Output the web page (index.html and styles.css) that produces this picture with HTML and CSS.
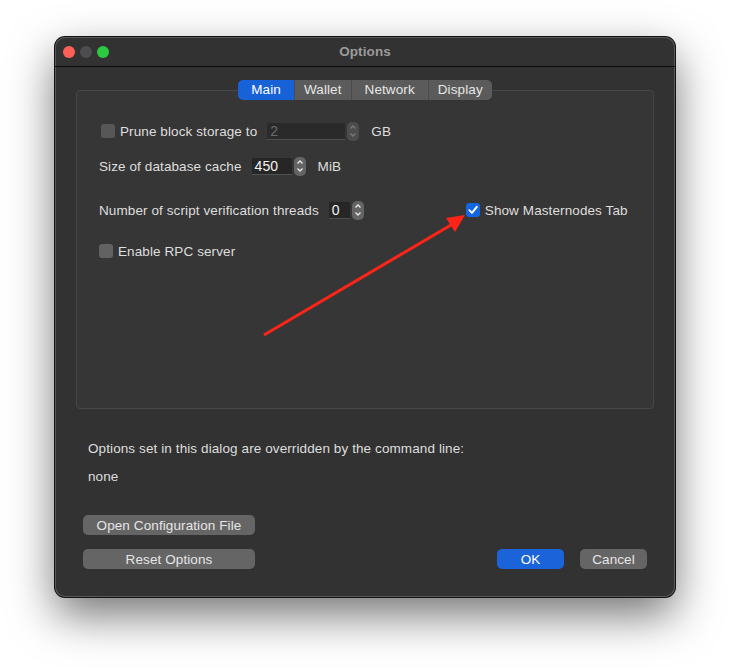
FILE: index.html
```html
<!DOCTYPE html>
<html lang="en">
<head>
  <meta charset="UTF-8">
  <title>Options</title>
  <link rel="stylesheet" href="styles.css">
</head>
<body>
  <div class="window">
    <div class="titlebar">
      <div class="lights">
        <span class="light red"></span>
        <span class="light gray"></span>
        <span class="light green"></span>
      </div>
      <div class="title">Options</div>
    </div>

    <div class="content">
      <div class="tabs">
        <div class="tab active">Main</div>
        <div class="tab">Wallet</div>
        <div class="tab tab-wide">Network</div>
        <div class="tab">Display</div>
      </div>

      <div class="group">
        <div class="row row-prune">
          <span class="check disabled"></span>
          <span class="label">Prune block storage to</span>
          <div class="spin disabled">
            <div class="field prune-field">2</div>
            <div class="stepper"><svg width="12" height="18" viewBox="0 0 12 18"><path d="M3.5 6.5 6 4 8.5 6.5M3.5 11.5 6 14 8.5 11.5" fill="none" stroke="currentColor" stroke-width="1.3"/></svg></div>
          </div>
          <span class="unit">GB</span>
        </div>

        <div class="row row-cache">
          <span class="label">Size of database cache</span>
          <div class="spin">
            <div class="field cache-field">450</div>
            <div class="stepper"><svg width="12" height="18" viewBox="0 0 12 18"><path d="M3.5 6.5 6 4 8.5 6.5M3.5 11.5 6 14 8.5 11.5" fill="none" stroke="currentColor" stroke-width="1.3"/></svg></div>
          </div>
          <span class="unit">MiB</span>
        </div>

        <div class="row row-threads">
          <span class="label">Number of script verification threads</span>
          <div class="spin">
            <div class="field threads-field">0</div>
            <div class="stepper"><svg width="12" height="18" viewBox="0 0 12 18"><path d="M3.5 6.5 6 4 8.5 6.5M3.5 11.5 6 14 8.5 11.5" fill="none" stroke="currentColor" stroke-width="1.3"/></svg></div>
          </div>
          <div class="masternodes">
            <span class="check checked"><svg width="14" height="14" viewBox="0 0 14 14"><path d="M3.3 7.2 6 9.9 10.8 3.8" fill="none" stroke="#fff" stroke-width="1.9" stroke-linecap="round" stroke-linejoin="round"/></svg></span>
            <span class="label">Show Masternodes Tab</span>
          </div>
        </div>

        <div class="row row-rpc">
          <span class="check"></span>
          <span class="label">Enable RPC server</span>
        </div>
      </div>

      <p class="note">Options set in this dialog are overridden by the command line:</p>
      <p class="note note-value">none</p>

      <div class="buttons">
        <button class="btn wide">Open Configuration File</button>
      </div>
      <div class="buttons bottom">
        <button class="btn wide">Reset Options</button>
        <div class="actions">
          <button class="btn primary">OK</button>
          <button class="btn">Cancel</button>
        </div>
      </div>
    </div>

    <!-- annotation arrow -->
    <svg class="arrow" width="620" height="560" viewBox="0 0 620 560">
      <line x1="209" y1="298" x2="396" y2="188" stroke="#ff2418" stroke-width="3"/>
      <polygon points="410,178 391,181 400,195" fill="#ff2418"/>
    </svg>
  </div>
</body>
</html>
```

FILE: styles.css
```css
body {
  margin: 0;
  padding-top: 37px;
  min-height: 670px;
  box-sizing: border-box;
  background: #ffffff;
  font-family: "Liberation Sans", Arial, sans-serif;
  font-size: 13.5px;
  letter-spacing: 0.1px;
  color: #dedede;
}

.window {
  position: relative;
  width: 620px;
  height: 560px;
  margin-left: 55px;
  background: #323232;
  border-radius: 10px;
  box-shadow: 0 0 0 1px #111, inset 0 0 0 1px #5a5a5a, 0 18px 45px rgba(0, 0, 0, 0.55);
  box-sizing: border-box;
  overflow: hidden;
}

.titlebar {
  position: relative;
  height: 29px;
  border-bottom: 1px solid #0c0c0c;
  display: flex;
  align-items: center;
  justify-content: center;
}

.lights {
  position: absolute;
  left: 8px;
  top: 9px;
  display: flex;
  gap: 5px;
}

.light {
  width: 12px;
  height: 12px;
  border-radius: 50%;
}
.light.red { background: #fe5f57; }
.light.gray { background: #4d4d4f; }
.light.green { background: #2bc840; }

.title {
  font-weight: bold;
  color: #9b9b9b;
}

.content {
  padding: 13px 21px 0;
}

.tabs {
  position: relative;
  z-index: 1;
  display: flex;
  justify-content: center;
  height: 20px;
}

.tab {
  height: 20px;
  line-height: 20px;
  padding: 0 9px;
  background: #5b5b5b;
  color: #e6e6e6;
  border-left: 1px solid #4a4a4a;
}
.tab.tab-wide { padding: 0 13px; }
.tab:first-child {
  border-left: none;
  border-radius: 5px 0 0 5px;
  padding: 0 13px;
}
.tab:last-child {
  border-radius: 0 5px 5px 0;
}
.tab.active {
  background: #1862d8;
  color: #fff;
}

.group {
  height: 319px;
  margin-top: -10px;
  padding: 30px 22px 0;
  background: #363636;
  border: 1px solid #474747;
  border-radius: 4px;
  box-sizing: border-box;
}

.row {
  display: flex;
  align-items: center;
  height: 20px;
}
.row-prune { margin-left: 2px; }
.row-cache { margin-top: 15px; }
.row-threads { margin-top: 24px; }
.row-rpc { margin-top: 21px; }

.check {
  width: 14px;
  height: 14px;
  border-radius: 3px;
  background: #626262;
  margin-right: 5px;
  flex: none;
}
.check.disabled { background: #575757; }
.check.checked {
  background: #1466e0;
}
.check svg { display: block; }

.spin {
  display: flex;
  align-items: center;
  margin-left: 10px;
}

.field {
  height: 16px;
  line-height: 16px;
  background: #262626;
  border-bottom: 1px solid #505050;
  padding: 0 3px;
  color: #f2f2f2;
  font-size: 14px;
}
.prune-field { width: 72px; }
.cache-field { width: 34px; }
.threads-field { width: 15px; }

.stepper {
  width: 12px;
  height: 19px;
  margin-left: 2px;
  border-radius: 5px;
  background: #646464;
  color: #e8e8e8;
  display: flex;
  align-items: center;
}
.stepper svg { display: block; }

.spin.disabled .field { color: #6a6a6a; background: #2a2a2a; }
.spin.disabled .stepper { background: #4c4c4c; color: #7a7a7a; }

.unit { margin-left: 12px; }

.masternodes {
  display: flex;
  align-items: center;
  margin-left: 102px;
}

.note {
  margin: 32px 0 0 12px;
  line-height: 16px;
}
.note-value { margin-top: 12px; }

.buttons {
  display: flex;
  align-items: center;
  margin: 30px 7px 0;
}
.buttons.bottom {
  margin-top: 14px;
  justify-content: space-between;
}

.actions {
  display: flex;
  gap: 16px;
}

.btn {
  height: 20px;
  width: 67px;
  border: none;
  border-radius: 5px;
  background: #656565;
  color: #e6e6e6;
  font-family: inherit;
  font-size: 13.5px;
  letter-spacing: 0.1px;
  padding: 0;
}
.btn.wide { width: 172px; }
.btn.primary {
  background: #1a63d9;
  color: #fff;
}

.arrow {
  position: absolute;
  left: 0;
  top: 0;
  pointer-events: none;
}
```
